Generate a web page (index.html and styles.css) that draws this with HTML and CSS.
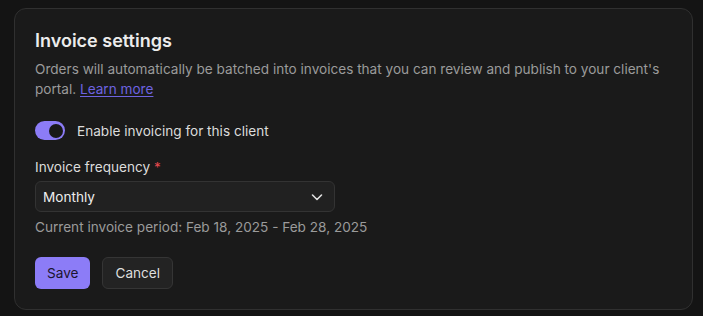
FILE: index.html
```html
<!DOCTYPE html>
<html lang="en">
<head>
    <meta charset="UTF-8">
    <meta name="viewport" content="width=device-width, initial-scale=1.0">
    <title>Invoice settings</title>
    <link rel="stylesheet" href="styles.css">
</head>
<body>
    <div class="card">
        <h2 class="card-title">Invoice settings</h2>
        <p class="card-description">
            Orders will automatically be batched into invoices that you can review and publish to your client's portal. <a href="#" class="link">Learn more</a>
        </p>

        <label class="toggle-row">
            <span class="toggle is-on"><span class="toggle-knob"></span></span>
            <span class="toggle-label">Enable invoicing for this client</span>
        </label>

        <div class="field">
            <label class="field-label" for="frequency">Invoice frequency <span class="required">*</span></label>
            <div class="select">
                <span class="select-value">Monthly</span>
                <svg class="select-chevron" width="12" height="8" viewBox="0 0 12 8" fill="none">
                    <path d="M1.5 2l4.5 4.5 4.5-4.5" stroke="currentColor" stroke-width="1.6" stroke-linecap="round" stroke-linejoin="round"/>
                </svg>
            </div>
            <p class="field-help">Current invoice period: Feb 18, 2025 - Feb 28, 2025</p>
        </div>

        <div class="actions">
            <button class="button button-primary">Save</button>
            <button class="button button-secondary">Cancel</button>
        </div>
    </div>
</body>
</html>
```

FILE: styles.css
```css
body {
    font-family: Inter, "Noto Sans", sans-serif;
    margin: 0;
    padding: 8px 10px 6px 14px;
    background-color: #141414;
    color: #e6e6e6;
}
.card {
    background: #1a1a1a;
    border: 1px solid #303030;
    border-radius: 12px;
    padding: 20px 20px 20px 20px;
}
.card-title {
    font-size: 18px;
    font-weight: 600;
    line-height: 24px;
    margin: 0 0 7px 0;
    color: #ececec;
}
.card-description {
    font-size: 13.6px;
    line-height: 19.5px;
    color: #9b9b9b;
    margin: 0;
    max-width: 640px;
}
.link {
    color: #6e63e0;
    text-decoration: underline;
    text-underline-offset: 2px;
}
.toggle-row {
    display: flex;
    align-items: center;
    gap: 12px;
    margin-top: 22px;
    font-size: 13.6px;
    color: #dcdcdc;
}
.toggle {
    width: 30px;
    height: 19px;
    border-radius: 10px;
    background: #8c7cf7;
    display: flex;
    align-items: center;
    justify-content: flex-end;
    padding: 0 2px;
    box-sizing: border-box;
}
.toggle-knob {
    width: 14px;
    height: 14px;
    border-radius: 50%;
    background: #191919;
}
.field {
    margin-top: 17px;
}
.field-label {
    display: block;
    font-size: 13.6px;
    line-height: 20px;
    color: #dcdcdc;
    margin-bottom: 4px;
}
.required {
    color: #e5484d;
}
.select {
    width: 300px;
    height: 31px;
    box-sizing: border-box;
    display: flex;
    align-items: center;
    justify-content: space-between;
    padding: 0 11px 0 7px;
    background: #212121;
    border: 1px solid #333;
    border-radius: 6px;
    font-size: 13.6px;
    color: #ededed;
}
.select-chevron {
    color: #e0e0e0;
}
.field-help {
    font-size: 13.6px;
    line-height: 20px;
    color: #9b9b9b;
    margin: 5px 0 0 0;
}
.actions {
    display: flex;
    gap: 12px;
    margin-top: 20px;
}
.button {
    font-family: inherit;
    font-size: 13.6px;
    height: 32px;
    padding: 0 12px;
    border-radius: 6px;
    cursor: pointer;
}
.button-primary {
    background: #8c7cf7;
    color: #1b1530;
    border: none;
}
.button-secondary {
    background: #232323;
    color: #dedede;
    border: 1px solid #353535;
}
```
